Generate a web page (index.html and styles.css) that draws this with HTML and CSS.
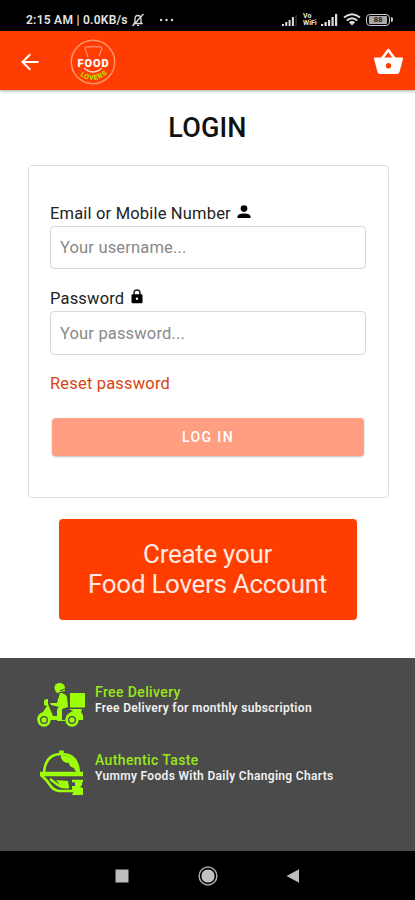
FILE: index.html
```html
<!DOCTYPE html>
<html lang="en">
<head>
<meta charset="utf-8">
<meta name="viewport" content="width=device-width, initial-scale=1">
<title>Login</title>
<link rel="stylesheet" href="styles.css">
</head>
<body>
<div class="screen">
  <div class="status">
    <span class="clock">2:15 AM | 0.0KB/s</span>
    <svg class="bell" width="14" height="14" viewBox="0 0 14 14" fill="none" stroke="#ddd" stroke-width="1.3"><path d="M3 10.5h8L10 9V6Q10 2.5 7 2.5T4 6v3zM6 12.3h2M12.5 1 1.5 13"/></svg>
    <svg class="dots" width="16" height="4" viewBox="0 0 16 4" fill="#ddd"><circle cx="2" cy="2" r="1.2"/><circle cx="7.5" cy="2" r="1.2"/><circle cx="13" cy="2" r="1.2"/></svg>
    <div class="indicators">
      <svg width="16" height="12" viewBox="0 0 16 12" fill="#ddd"><path d="M0 10h2v2H0zM3.3 8h2v4h-2zM6.6 6h2v6h-2zM9.9 3h2v9h-2z"/><path d="M13.4 1h1.4v11h-1.4z" fill="#333"/></svg>
      <span class="vowifi">Vo<br>WiFi</span>
      <svg width="17" height="12" viewBox="0 0 17 12" fill="#ddd"><path d="M0 10h2.2v2H0zM3.5 8h2.2v4H3.5zM7 6h2.2v6H7zM10.5 3h2.2v9h-2.2zM14 0h2.2v12H14z"/></svg>
      <svg class="wifi" width="18" height="13" viewBox="0 0 18 13" fill="none" stroke="#ddd" stroke-width="2"><path d="M1 4.5Q9-2 17 4.5M3.8 7.5Q9 3 14.2 7.5"/><path d="M9 12.5 5.8 9.3Q9 6.8 12.2 9.3z" fill="#ddd" stroke="none"/></svg>
      <span class="battery"><span class="level">88</span></span>
    </div>
  </div>

  <header class="bar">
    <svg class="back" width="18" height="18" viewBox="0 0 18 18" fill="none" stroke="#fff" stroke-width="2"><path d="M17.5 9H2M9.3 1.2 1.5 9l7.8 7.8"/></svg>
    <svg class="logo" width="46" height="46" viewBox="0 0 46 46">
      <circle cx="23" cy="23" r="21.7" fill="none" stroke="#ff9468" stroke-width="1.5"/>
      <path d="M18 18 15 9q1-2 5-1 3-1 6 0 5-1 6 1l-3 8" fill="none" stroke="#ff8c70" stroke-width="1.3"/>
      <text class="logo-name" x="7.500" y="28" textLength="31">FOOD</text>
      <path d="M14 29q9 8 18 0" fill="none" stroke="#ffd2c4" stroke-width="1.5"/>
      <path id="smile" d="M9 36Q23 46.500 37 35" fill="none"/>
      <text class="logo-sub"><textPath href="#smile" startOffset="1" textLength="30">LOVERS</textPath></text>
    </svg>
    <svg class="basket" width="31" height="27" viewBox="0 0 31 27" fill="none"><path d="m9 10.5 6.3-8.5 6.3 8.5" stroke="#fff" stroke-width="2.6" stroke-linejoin="round"/><path d="M2 9.5h27q1.3 0 1 1.3L26.5 24q-.5 2-2.5 2H7q-2 0-2.5-2L1 10.8Q.7 9.5 2 9.5z" fill="#fff"/><circle cx="15.5" cy="17.7" r="2.7" fill="#ff3d03"/></svg>
  </header>

  <main>
    <h1>LOGIN</h1>
    <form class="card">
      <label for="user"><span>Email or Mobile Number</span>
        <svg class="person" width="14" height="14" viewBox="0 0 14 14"><circle cx="7" cy="3.6" r="3.3"/><path d="M.5 13v-1.6Q.5 8.5 7 8.5t6.500 2.900V13z"/></svg>
      </label>
      <input id="user" type="text" placeholder="Your username...">
      <label for="pass"><span>Password</span>
        <svg class="lock" width="12" height="15" viewBox="0 0 12 15"><path d="M3 6V4a3 3 0 0 1 6 0v2" fill="none" stroke="#222" stroke-width="1.5"/><rect x=".5" y="5.2" width="11" height="9" rx="1.2"/><circle cx="6" cy="9.7" r="1.2" fill="#fff"/></svg>
      </label>
      <input id="pass" type="password" placeholder="Your password...">
      <a class="reset">Reset password</a>
      <button class="login" type="button">LOG IN</button>
    </form>
    <a class="create"><span>Create your</span><span>Food Lovers Account</span></a>
  </main>

  <footer>
    <section class="feature">
      <svg width="50" height="46" viewBox="0 0 50 46" fill="#9cff08">
        <path d="M18.500 7Q18 1 23.500 1q5 0 5.500 5v3l-5 1-2 1q-3-1-3-4z"/>
        <path d="M24 11q5 0 7 4l1 10-6 2v12h-5V27l2-2-8-2-1-2 7 0z"/>
        <rect x="34" y="11" width="15" height="14.500" rx=".5"/>
        <path d="M8 19q0-2 4-2v5l5 12h5v5h7q1-8 8-10l-4-2h13l-1 3q3 3 2 8H1q0-6 6-8l4-6-3-1z"/>
        <circle cx="8" cy="38" r="6.700"/><circle cx="36" cy="38" r="6.700"/>
        <g fill="none" stroke="#4b4b4b" stroke-width="1.300"><circle cx="8" cy="38" r="3.300"/><circle cx="36" cy="38" r="3.300"/><path d="m14 24 6 8 1-7M28 28l5-2M24 9l5-2"/></g>
      </svg>
      <div><h2>Free Delivery</h2><p>Free Delivery for monthly subscription</p></div>
    </section>
    <section class="feature">
      <svg width="50" height="46" viewBox="0 0 50 46" fill="none" stroke="#9cff08">
        <path d="M8 23Q9 4 25.500 4T43 23" stroke-width="2.500"/>
        <path d="M25.500 5V.500" stroke-width="4.500"/>
        <path d="M25 5q17 1 18 18-4-1-5-5-5-1-5-5-6 0-8-5z" fill="#9cff08" stroke="none"/>
        <path d="M4 24h43" stroke-width="4.500"/>
        <path d="M5 25q5 4 9 10 3 5 9 6h15M14 29l8 6q4 3 11 2M36 31h11" stroke-width="2.500"/>
        <path d="m20 30 12 1 1 6-8-1zM36 36h3v-4h7v3l-2 2 3 1v7H36l2-4h-2z" fill="#9cff08" stroke="none"/>
      </svg>
      <div><h2>Authentic Taste</h2><p>Yummy Foods With Daily Changing Charts</p></div>
    </section>
  </footer>

  <nav>
    <svg width="20" height="20" viewBox="0 0 20 20"><rect x="3.5" y="3.500" width="13" height="13" fill="#bdbdbd"/></svg>
    <svg width="20" height="20" viewBox="0 0 20 20"><circle cx="10" cy="10" r="8.900" fill="none" stroke="#aaa" stroke-width="1.500"/><circle cx="10" cy="10" r="6.600" fill="#c2c2c2"/></svg>
    <svg width="20" height="20" viewBox="0 0 20 20"><path d="M15 3.300v13.400L2.500 10z" fill="#bdbdbd"/></svg>
  </nav>
</div>
</body>
</html>
```
FILE: styles.css
```css
* { box-sizing: border-box; }
body { margin: 0; font-family: Roboto, "Liberation Sans", sans-serif; color: #222; background: #fff; }
svg { display: block; flex: none; }
h1, h2, p { margin: 0; white-space: nowrap; }
.screen { width: 415px; height: 900px; display: flex; flex-direction: column; overflow: hidden; }

.status { height: 31px; flex: none; background: #000; color: #e4e4e4; display: flex; align-items: center; padding: 8px 25px 0 26px; }
.clock { font-size: 12px; font-weight: 600; line-height: 14px; letter-spacing: .26px; white-space: nowrap; width: 103px; }
.bell { margin-left: 2px; }
.dots { margin-left: 14px; }
.indicators { margin-left: auto; display: flex; align-items: center; }
.vowifi { font-size: 7px; line-height: 6.5px; font-weight: 700; width: 15px; margin: 0 3px 0 5px; }
.wifi { margin-left: 5px; }
.battery { position: relative; width: 24px; height: 12px; margin: 0 0 0 5px; border: 1.5px solid #ccc; border-radius: 4px; padding: 1px 2px; display: flex; }
.battery::after { content: ""; position: absolute; right: -4px; top: 2px; width: 2px; height: 5px; background: #ccc; border-radius: 0 2px 2px 0; }
.level { flex: 1; background: #aaa; color: #222; font-size: 8px; line-height: 7px; font-weight: 700; text-align: center; border-radius: 1px; }

.bar { height: 59px; flex: none; background: #ff3d03; display: flex; align-items: center; padding: 0 11px 0 21px; box-shadow: 0 1px 3px rgba(0,0,0,.35); z-index: 1; }
.back { margin-top: 2px; }
.logo { margin: 2px 0 0 31px; }
.logo-name { fill: #fff; font-size: 11px; font-weight: 900; }
.logo-sub { fill: #b9dc00; font-size: 7px; font-weight: 900; }
.basket { margin: 2px 0 0 auto; }

main { height: 568px; flex: none; display: flex; flex-direction: column; align-items: center; padding-top: 21px; }
h1 { font-size: 27px; font-weight: 500; line-height: 34px; letter-spacing: .15px; color: #111; }
.card { width: 361px; height: 333px; margin: 20px 0 0 2px; padding: 36px 21px 0; border: 1px solid #dedede; border-radius: 4px; display: flex; flex-direction: column; }
label { height: 24px; flex: none; display: flex; align-items: center; font-size: 16.5px; line-height: 24px; letter-spacing: .18px; white-space: nowrap; }
.person { margin: -4px 0 0 6px; }
.lock { margin: -5px 0 0 7px; }
input { height: 43px; width: 316px; flex: none; margin: 0 0 18px; padding: 0 9px; border: 1px solid #d8d8d8; border-radius: 4px; font: 400 16.5px Roboto, sans-serif; letter-spacing: .16px; background: #fff; outline: 0; }
#pass { height: 44px; }
input::placeholder { color: #888; opacity: 1; }
.reset { font-size: 16.5px; line-height: 22px; letter-spacing: .18px; color: #d64510; white-space: nowrap; }
.login { width: 312px; height: 38px; margin: 23px 0 0 2px; border: 0; border-radius: 4px; background: #ff9e80; color: #fff; font: 500 14px Roboto, sans-serif; letter-spacing: 1.4px; box-shadow: 0 1px 2px rgba(0,0,0,.25); }
.create { width: 298px; height: 101px; margin-top: 21px; background: #ff3d00; color: #ffe9e0; border-radius: 4px; display: flex; flex-direction: column; align-items: center; justify-content: center; font-size: 26px; line-height: 29.5px; letter-spacing: -.3px; white-space: nowrap; }

footer { height: 193px; flex: none; background: #4b4b4b; padding: 24px 36px 0; }
.feature { height: 68px; display: flex; gap: 9px; }
.feature h2 { font-size: 14px; font-weight: 500; line-height: 18px; letter-spacing: .38px; color: #9ae61c; margin-top: 1px; }
.feature p { font-size: 12px; font-weight: 600; line-height: 15px; letter-spacing: .32px; color: #f1f1f1; }
nav { height: 49px; flex: none; background: #000; display: flex; align-items: center; justify-content: center; gap: 66px; }
```
